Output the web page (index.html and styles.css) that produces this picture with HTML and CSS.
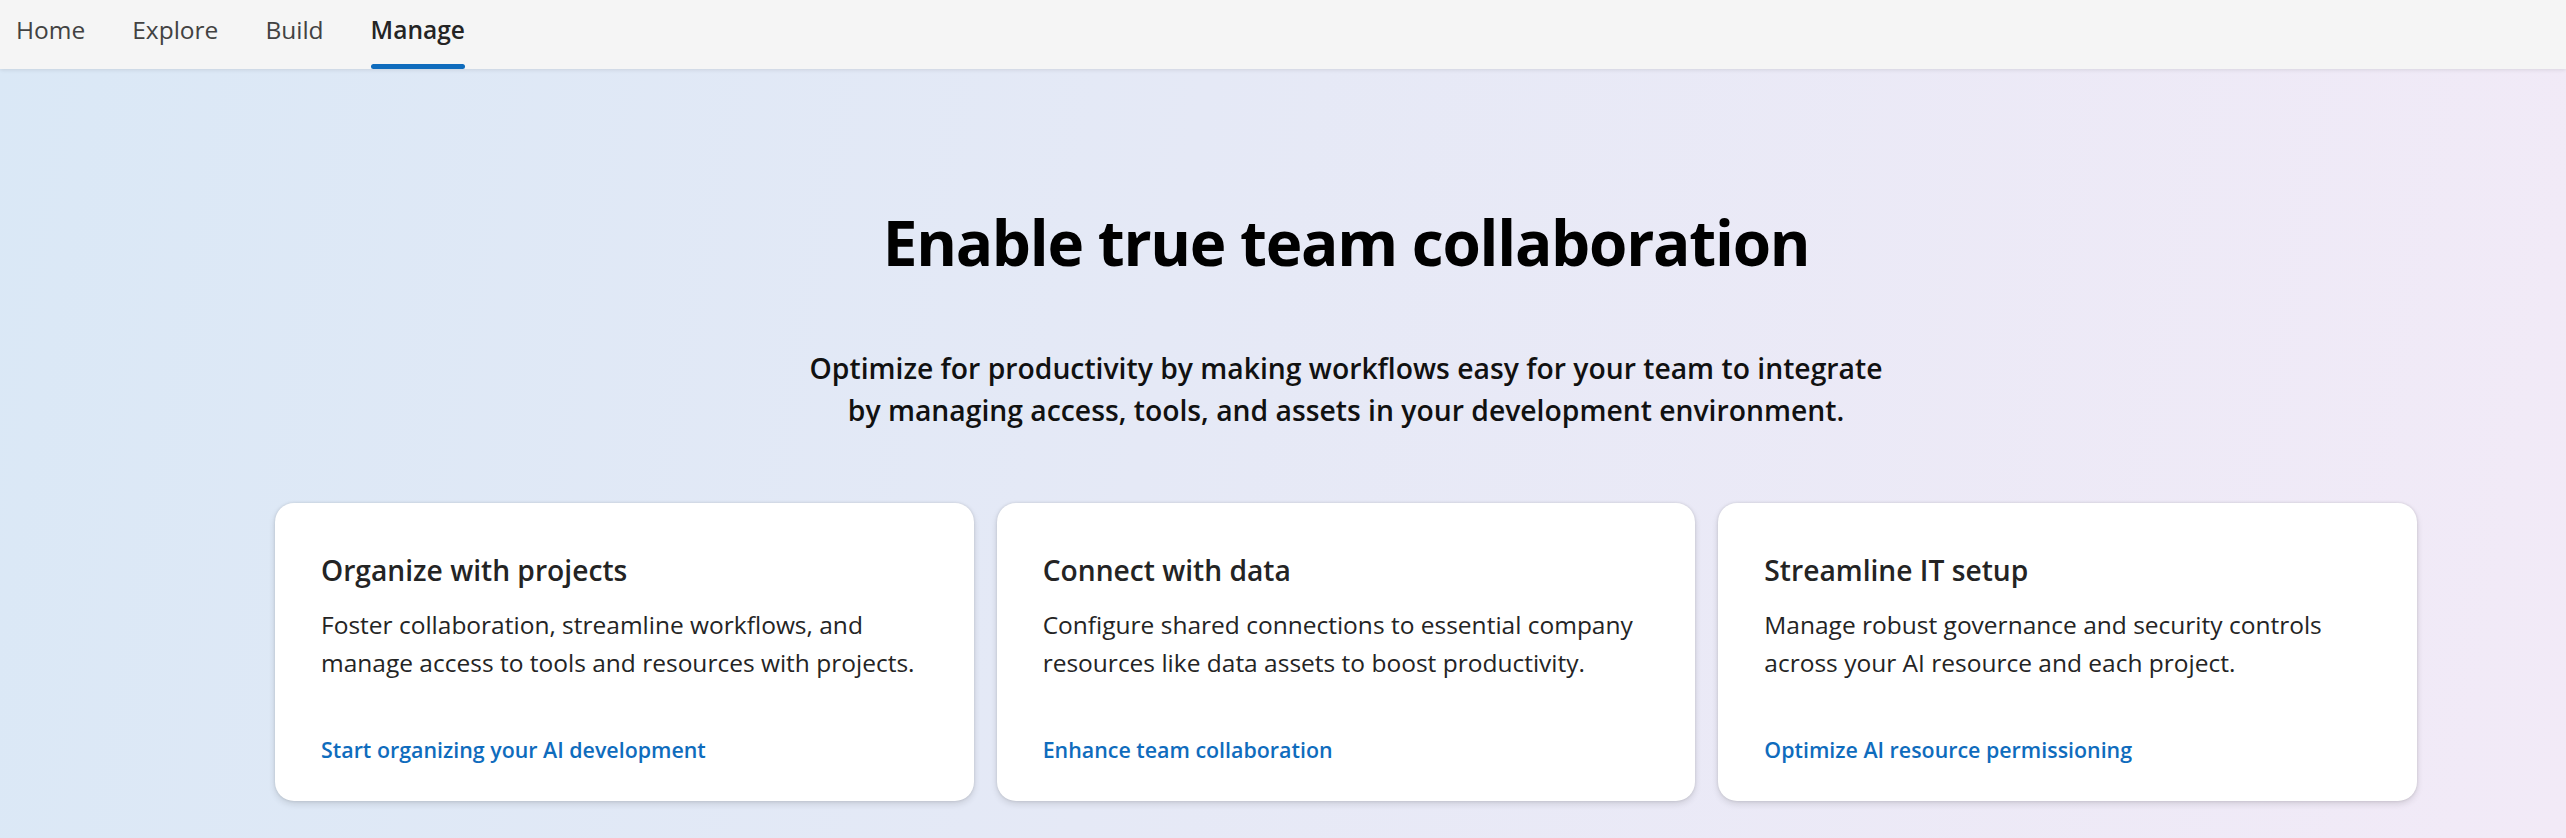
FILE: index.html
```html
<!DOCTYPE html>
<html lang="en">
<head>
<meta charset="utf-8">
<title>Manage</title>
<link rel="stylesheet" href="styles.css">
</head>
<body>
<header class="topbar">
  <nav class="tabs">
    <a class="tab" href="#">Home</a>
    <a class="tab" href="#">Explore</a>
    <a class="tab" href="#">Build</a>
    <a class="tab tab-active" href="#">Manage</a>
  </nav>
</header>
<main class="hero">
  <h1 class="hero-title">Enable true team collaboration</h1>
  <p class="hero-sub">Optimize for productivity by making workflows easy for your team to integrate<br>by managing access, tools, and assets in your development environment.</p>
  <section class="cards">
    <article class="card">
      <h2 class="card-title">Organize with projects</h2>
      <p class="card-text">Foster collaboration, streamline workflows, and manage access to tools and resources with projects.</p>
      <a class="card-link" href="#">Start organizing your AI development</a>
    </article>
    <article class="card">
      <h2 class="card-title">Connect with data</h2>
      <p class="card-text">Configure shared connections to essential company resources like data assets to boost productivity.</p>
      <a class="card-link" href="#">Enhance team collaboration</a>
    </article>
    <article class="card">
      <h2 class="card-title">Streamline IT setup</h2>
      <p class="card-text">Manage robust governance and security controls across your AI resource and each project.</p>
      <a class="card-link" href="#">Optimize AI resource permissioning</a>
    </article>
  </section>
</main>
</body>
</html>
```

FILE: styles.css
```css
* { box-sizing: border-box; }

html, body {
  margin: 0;
  padding: 0;
  height: 100%;
}

body {
  font-family: "Open Sans", "Noto Sans", sans-serif;
  color: #242424;
  background: linear-gradient(100deg, #dae8f6 0%, #e5e9f6 45%, #f2eaf7 100%);
  overflow: hidden;
}

.topbar {
  position: relative;
  z-index: 2;
  height: 69px;
  background: #f5f5f5;
  box-shadow: 0 1px 4px rgba(0, 0, 0, 0.10);
}

.tabs {
  display: flex;
  gap: 47px;
  height: 100%;
  padding-left: 16px;
}

.tab {
  position: relative;
  display: flex;
  align-items: center;
  height: 100%;
  padding-bottom: 10px;
  font-size: 24.5px;
  color: #424242;
  text-decoration: none;
}

.tab-active {
  color: #242424;
  font-weight: 600;
}

.tab-active::after {
  content: "";
  position: absolute;
  left: 0;
  right: 0;
  bottom: 0;
  height: 5px;
  border-radius: 3px;
  background: #0f6cbd;
}

.hero {
  padding: 0 149px 0 275px;
  display: flex;
  flex-direction: column;
  align-items: center;
}

.hero-title {
  margin: 136px 0 0;
  font-size: 62px;
  line-height: 74px;
  font-weight: 700;
  color: #000;
  letter-spacing: -1.25px;
}

.hero-sub {
  margin: 68px 0 0;
  font-size: 28.3px;
  line-height: 42px;
  font-weight: 600;
  text-align: center;
  color: #111;
}

.cards {
  align-self: stretch;
  display: grid;
  grid-template-columns: repeat(3, 1fr);
  gap: 23px;
  margin-top: 72px;
}

.card {
  display: flex;
  flex-direction: column;
  height: 298px;
  padding: 49px 46px 0;
  background: #fff;
  border-radius: 19px;
  box-shadow: 0 0 3px rgba(0, 0, 0, 0.12), 0 3px 7px rgba(0, 0, 0, 0.12);
}

.card-title {
  margin: 0;
  font-size: 28.2px;
  line-height: 36px;
  font-weight: 600;
  color: #242424;
}

.card-text {
  margin: 18px 0 0;
  font-size: 24.5px;
  line-height: 38.4px;
  color: #242424;
}

.card-link {
  margin-top: 52px;
  font-size: 21.4px;
  line-height: 30px;
  font-weight: 600;
  color: #0f6cbd;
  text-decoration: none;
}
```
